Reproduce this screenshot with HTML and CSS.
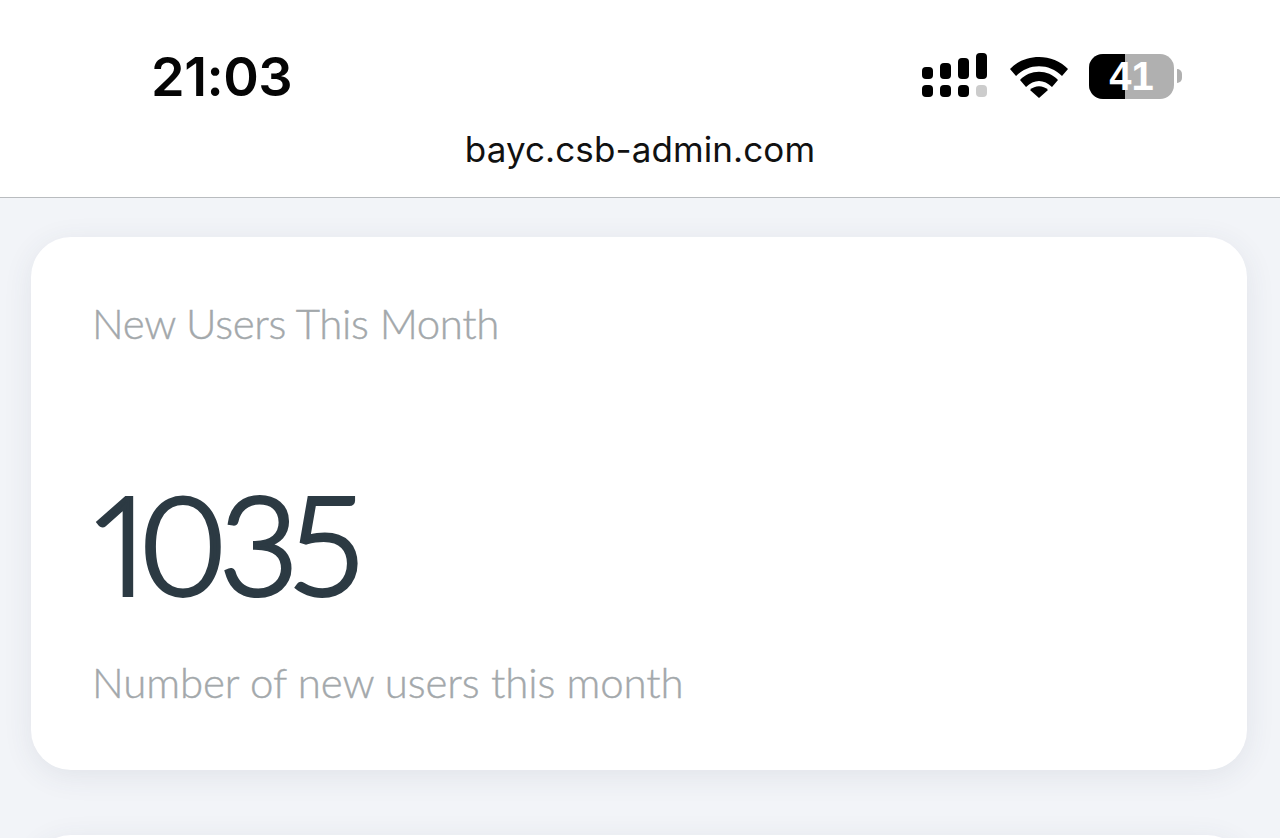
FILE: index.html
```html
<!DOCTYPE html>
<html lang="en">
<head>
    <meta charset="UTF-8">
    <meta name="viewport" content="width=device-width, initial-scale=1.0">
    <title>New Users</title>
    <link rel="stylesheet" href="styles.css">
</head>
<body>
    <header class="top-bar">
        <div class="status-row">
            <span class="clock">21:03</span>
            <div class="status-icons">
                <svg class="signal" width="66" height="46" viewBox="0 0 66 46">
                    <rect x="0" y="14" width="11" height="12" rx="4"/>
                    <rect x="18" y="10" width="11" height="16" rx="4"/>
                    <rect x="36" y="5" width="11" height="21" rx="4"/>
                    <rect x="54" y="0" width="11" height="26" rx="4"/>
                    <rect x="0" y="32" width="11" height="12" rx="4"/>
                    <rect x="18" y="32" width="11" height="12" rx="4"/>
                    <rect x="36" y="32" width="11" height="12" rx="4"/>
                    <rect class="signal-off" x="54" y="32" width="11" height="12" rx="4"/>
                </svg>
                <svg class="wifi" width="58" height="44" viewBox="0 0 58 44">
                    <path d="M0 15 C15 -1 43 -1 58 15 L52 22 C39 9 19 9 6 22 Z"/>
                    <path d="M10 26 C20 15 38 15 48 26 L42 33 C34 25 24 25 16 33 Z"/>
                    <path d="M20 36 C25 31 33 31 38 36 L29 44 Z"/>
                </svg>
                <div class="battery">
                    <div class="battery-body">
                        <div class="battery-fill"></div>
                        <span class="battery-num">41</span>
                    </div>
                    <div class="battery-cap"></div>
                </div>
            </div>
        </div>
        <div class="url">bayc.csb-admin.com</div>
    </header>

    <main class="content">
        <section class="card">
            <h2 class="card-title">New Users This Month</h2>
            <div class="card-value">1035</div>
            <p class="card-note">Number of new users this month</p>
        </section>
        <section class="card"></section>
    </main>
</body>
</html>
```

FILE: styles.css
```css
body {
    margin: 0;
    height: 838px;
    overflow: hidden;
    background-color: #f2f4f8;
    font-family: "Inter", "Liberation Sans", sans-serif;
}

.top-bar {
    height: 198px;
    box-sizing: border-box;
    background-color: white;
    border-bottom: 1px solid #b9bcbf;
    padding-top: 45px;
}

.status-row {
    display: flex;
    justify-content: space-between;
    align-items: center;
    height: 62px;
    padding: 0 98px 0 151px;
}

.clock {
    font-size: 54px;
    font-weight: 600;
    letter-spacing: -0.5px;
    color: #050505;
}

.status-icons {
    display: flex;
    align-items: center;
    gap: 22px;
}

.signal {
    fill: #000;
}

.signal-off {
    fill: #ccc;
}

.wifi {
    fill: #000;
}

.battery {
    display: flex;
    align-items: center;
    gap: 3px;
    margin-left: -1px;
}

.battery-body {
    position: relative;
    width: 85px;
    height: 45px;
    border-radius: 14px;
    background-color: #b0b0b0;
    overflow: hidden;
}

.battery-fill {
    width: 42%;
    height: 100%;
    background-color: #000;
}

.battery-num {
    position: absolute;
    top: 0;
    left: 0;
    width: 100%;
    text-align: center;
    font-family: "Liberation Sans", sans-serif;
    font-size: 40px;
    font-weight: bold;
    line-height: 45px;
    color: white;
}

.battery-cap {
    width: 5px;
    height: 14px;
    border-radius: 0 6px 6px 0;
    background-color: #b0b0b0;
}

.url {
    margin-top: 21px;
    text-align: center;
    font-size: 35px;
    letter-spacing: 0.1px;
    line-height: 42px;
    color: #111;
}

.content {
    display: flex;
    flex-direction: column;
    gap: 65px;
    height: 640px;
    box-sizing: border-box;
    overflow: hidden;
    padding: 39px 33px 0 31px;
}

.card {
    box-sizing: border-box;
    height: 533px;
    flex-shrink: 0;
    padding: 61px 61px 0;
    background-color: white;
    border-radius: 40px;
    box-shadow: 0 6px 30px rgba(60, 70, 90, 0.09);
    font-family: "Lato", "Liberation Sans", sans-serif;
}

.card-title {
    margin: 0;
    font-size: 42px;
    font-weight: 300;
    letter-spacing: -0.35px;
    -webkit-text-stroke: 0.4px #a3a8ab;
    line-height: 50px;
    color: #a3a8ab;
}

.card-value {
    margin-top: 119px;
    margin-left: 3px;
    font-size: 137px;
    font-weight: 300;
    letter-spacing: -8px;
    -webkit-text-stroke: 4px #2c3a43;
    font-variant-numeric: proportional-nums;
    line-height: 150px;
    color: #2c3a43;
}

.card-note {
    margin: 40px 0 0;
    font-size: 42px;
    font-weight: 300;
    letter-spacing: -0.1px;
    -webkit-text-stroke: 0.4px #a3a8ab;
    line-height: 50px;
    color: #a3a8ab;
}
```
